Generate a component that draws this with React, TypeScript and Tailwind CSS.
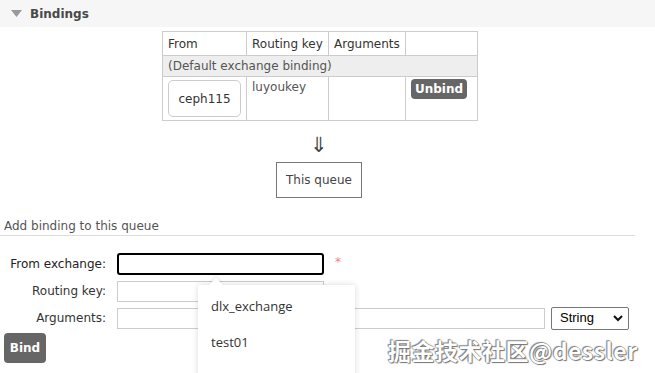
import React from "react";

export default function App() {
  const v = { fontFamily: '"DejaVu Sans", Verdana, sans-serif' };
  return (
    <div className="relative w-[655px] h-[373px] overflow-hidden bg-white text-[12px] text-[#333]" style={v}>
      {/* Header */}
      <div className="h-[27px] bg-[#f6f6f6] flex items-center pl-[11px] gap-[8px]">
        <svg width="11" height="7" viewBox="0 0 11 7"><polygon points="0,0 11,0 5.5,7" fill="#999" /></svg>
        <span className="font-bold text-[12px] text-[#484848]">Bindings</span>
      </div>

      {/* Table */}
      <div className="flex justify-start pl-[162px] pt-[4px]">
        <table className="border-collapse border border-[#ccc] text-[12px] text-[#333]">
          <thead>
            <tr className="h-[24px]">
              <th className="border border-[#ccc] font-normal text-left px-[5px] w-[84px]">From</th>
              <th className="border border-[#ccc] font-normal text-left px-[5px] w-[82px]">Routing key</th>
              <th className="border border-[#ccc] font-normal text-left px-[5px] w-[77px]">Arguments</th>
              <th className="border border-[#ccc] w-[72px]"></th>
            </tr>
          </thead>
          <tbody>
            <tr className="h-[21px] bg-[#eeeeee]">
              <td colSpan={4} className="border border-[#ccc] px-[5px] text-[#555]">(Default exchange binding)</td>
            </tr>
            <tr className="h-[44px]">
              <td className="border border-[#ccc] px-[5px] align-middle">
                <div className="w-[73px] h-[37px] border border-[#ccc] rounded-[5px] flex items-center justify-center text-[#333]">ceph115</div>
              </td>
              <td className="border border-[#ccc] px-[5px] align-top pt-[1px] text-[#555]">luyoukey</td>
              <td className="border border-[#ccc]"></td>
              <td className="border border-[#ccc] align-top pt-[2px] px-[5px]">
                <div className="w-[56px] h-[20px] bg-[#666] rounded-[4px] text-white font-bold flex items-center justify-center">Unbind</div>
              </td>
            </tr>
          </tbody>
        </table>
      </div>

      {/* Arrow + this queue */}
      <div className="flex flex-col items-center w-[638px] pt-[13px]">
        <div className="text-[21px] leading-[22px] text-[#444] font-light" style={{ fontFamily: '"Liberation Sans", "DejaVu Sans", sans-serif' }}>⇓</div>
        <div className="mt-[6px] w-[86px] h-[36px] border border-[#777] flex items-center justify-center text-[#444]">This queue</div>
      </div>

      {/* Add binding */}
      <div className="mt-[21px] w-[635px] pl-[4px] leading-[14px] pb-[2px] border-b border-[#ddd] text-[#555]">Add binding to this queue</div>

      <div className="flex flex-col pt-[17px]">
        <div className="flex items-center h-[22px]">
          <label className="w-[107px] text-right pr-[1px] text-[#222]">From exchange:</label>
          <div className="ml-[10px] w-[207px] h-[22px] border-2 border-black rounded-[3px]"></div>
          <span className="ml-[11px] text-[#f47f7f] text-[12px] -mt-[4px]">*</span>
        </div>
        <div className="flex items-center h-[22px] mt-[5px]">
          <label className="w-[107px] text-right pr-[1px] text-[#333]">Routing key:</label>
          <div className="ml-[10px] w-[207px] h-[21px] border border-[#ccc]"></div>
        </div>
        <div className="flex items-center h-[22px] mt-[5px]">
          <label className="w-[107px] text-right pr-[1px] text-[#333]">Arguments:</label>
          <div className="ml-[10px] w-[428px] h-[21px] border border-[#ccc]"></div>
          <div className="ml-[6px] w-[78px] h-[23px] border border-[#777] rounded-[2px] flex items-center justify-between pl-[8px] pr-[5px] text-[13px] text-black" style={{ fontFamily: '"Liberation Sans", Arial, sans-serif' }}>
            <span>String</span>
            <svg width="10" height="7" viewBox="0 0 10 7"><polyline points="1,1 5,5 9,1" fill="none" stroke="#111" strokeWidth="2" /></svg>
          </div>
        </div>
        <div className="ml-[4px] mt-[4px] w-[42px] h-[30px] bg-[#666] rounded-[4px] text-white font-bold flex items-center justify-center">Bind</div>
      </div>

      {/* Dropdown */}
      <div className="absolute left-[198px] top-[285px] w-[157px] h-[100px] bg-white shadow-[0_0_6px_rgba(0,0,0,0.15)] rounded-[2px]" style={{ fontFamily: '"Open Sans", "Noto Sans", sans-serif' }}>
        <div className="absolute -top-[5px] left-[13px] w-[10px] h-[10px] bg-white rotate-45 shadow-[-2px_-2px_3px_rgba(0,0,0,0.06)]"></div>
        <div className="relative pl-[13px] pt-[11px] text-[13px] text-[#333] leading-[20px]">dlx_exchange</div>
        <div className="relative pl-[13px] pt-[16px] text-[13px] text-[#333] leading-[20px]">test01</div>
      </div>

      {/* Watermark */}
      <div className="absolute left-[388px] top-[333px] text-[23px] text-white font-bold tracking-[0.5px]" style={{ fontFamily: '"Noto Sans CJK SC", sans-serif', textShadow: "0 0 1px #555, 1px 1px 1px #777, -1px -1px 1px #888" }}>
        掘金技术社区@dessler
      </div>
    </div>
  );
}
